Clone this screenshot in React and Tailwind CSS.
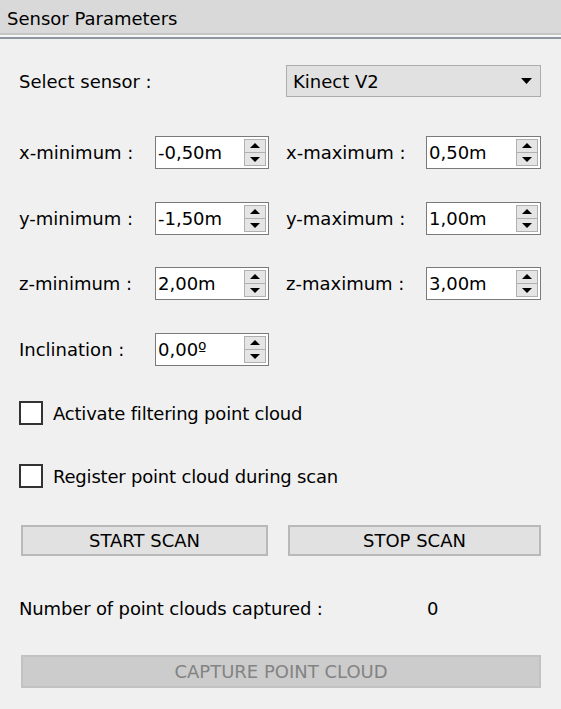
import React from "react";

const font = { fontFamily: '"DejaVu Sans", Verdana, sans-serif' };

function UpArrow() {
  return (
    <svg width="10" height="6" viewBox="0 0 10 6" className="block">
      <polygon points="5,0 10,5 0,5" fill="#000" />
    </svg>
  );
}
function DownArrow() {
  return (
    <svg width="10" height="6" viewBox="0 0 10 6" className="block">
      <polygon points="0,1 10,1 5,6" fill="#000" />
    </svg>
  );
}

function SpinBox({ value, w = "w-[114px]" }) {
  return (
    <div className={`${w} h-[33px] flex items-stretch border border-[#7a7a7a] bg-white`}>
      <div className="flex-1 flex items-center pl-[2px] text-[18px] text-black leading-none">{value}</div>
      <div className="flex flex-col w-[22px] my-[2px] mr-[2px]">
        <div className="flex-1 flex items-center justify-center bg-[#e5e5e5] border border-[#b0b0b0]">
          <UpArrow />
        </div>
        <div className="flex-1 flex items-center justify-center bg-[#e5e5e5] border border-[#b0b0b0] border-t-0">
          <DownArrow />
        </div>
      </div>
    </div>
  );
}

function Row({ l1, v1, l2, v2, className = "" }) {
  return (
    <div className={`flex items-center h-[33px] ${className}`}>
      <div className="w-[136px] text-[18px] text-black">{l1}</div>
      <SpinBox value={v1} />
      {l2 && (
        <>
          <div className="w-[157px] pl-[17px] text-[18px] text-black">{l2}</div>
          <SpinBox value={v2} w="w-[115px]" />
        </>
      )}
    </div>
  );
}

function Check({ label, className = "" }) {
  return (
    <div className={`flex items-center h-[24px] ${className}`}>
      <div className="w-[24px] h-[24px] border-2 border-[#333] bg-white" />
      <span className="ml-[10px] text-[18px] text-black tracking-[-0.2px]">{label}</span>
    </div>
  );
}

export default function App() {
  return (
    <div className="w-[561px] h-[709px] bg-[#f0f0f0] overflow-hidden" style={font}>
      <div className="h-[33px] bg-[#d9d9d9] flex items-center pl-[7px] pt-[3px] text-[18px] text-black">
        Sensor Parameters
      </div>
      <div className="h-[2px] bg-[#c6c6c6]" />
      <div className="h-[2px] bg-[#f7f7f7]" />
      <div className="h-[2px] bg-[#8d96a0]" />

      <div className="pl-[19px] pr-[20px]">
        <div className="flex items-center mt-[26px] h-[32px]">
          <div className="w-[267px] text-[18px] text-black">Select sensor :</div>
          <div className="w-[255px] h-[32px] bg-[#e1e1e1] border border-[#adadad] flex items-center justify-between pl-[6px] pr-[8px]">
            <span className="text-[18px] text-black">Kinect V2</span>
            <svg width="11" height="6" viewBox="0 0 11 6" className="block">
              <polygon points="0,0 11,0 5.5,6" fill="#000" />
            </svg>
          </div>
        </div>

        <Row className="mt-[39px]" l1="x-minimum :" v1="-0,50m" l2="x-maximum :" v2="0,50m" />
        <Row className="mt-[33px]" l1="y-minimum :" v1="-1,50m" l2="y-maximum :" v2="1,00m" />
        <Row className="mt-[32px]" l1="z-minimum :" v1="2,00m" l2="z-maximum :" v2="3,00m" />
        <Row className="mt-[33px]" l1="Inclination :" v1="0,00º" />

        <Check className="mt-[35px]" label="Activate filtering point cloud" />
        <Check className="mt-[39px]" label="Register point cloud during scan" />

        <div className="flex mt-[37px] gap-[20px] pl-[2px]">
          <button className="w-[247px] h-[31px] bg-[#e1e1e1] border-2 border-[#b9b9b9] text-[18px] text-black flex items-center justify-center">
            START SCAN
          </button>
          <button className="w-[253px] h-[31px] bg-[#e1e1e1] border-2 border-[#b9b9b9] text-[18px] text-black flex items-center justify-center">
            STOP SCAN
          </button>
        </div>

        <div className="flex items-center mt-[38px] h-[28px] text-[18px] text-black">
          <div className="w-[408px] tracking-[-0.15px]">Number of point clouds captured :</div>
          <div>0</div>
        </div>

        <div className="ml-[2px] mt-[33px] w-[520px] h-[33px] bg-[#cccccc] border-2 border-[#c2c2c2] text-[18px] text-[#838383] flex items-center justify-center">
          CAPTURE POINT CLOUD
        </div>
      </div>
    </div>
  );
}
